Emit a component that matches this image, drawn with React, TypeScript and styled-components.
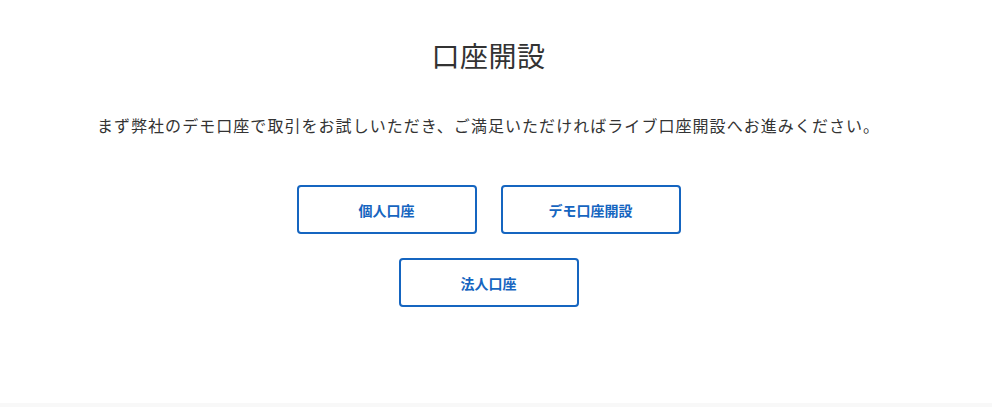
import React from "react";
import styled, { createGlobalStyle } from "styled-components";

const GlobalStyle = createGlobalStyle`
  body {
    margin: 0;
    background: #f8f8f8;
    font-family: "Noto Sans CJK JP", "Noto Sans", sans-serif;
  }
`;

const OpenAccount = () => {
  return (
    <>
      <GlobalStyle />
      <MainWrapper>
        <Inner>
          <Title>口座開設</Title>
          <Lead>
            まず弊社のデモ口座で取引をお試しいただき、ご満足いただければライブ口座開設へお進みください。
          </Lead>
          <ButtonGroup>
            <AccountButton>個人口座</AccountButton>
            <AccountButton>デモ口座開設</AccountButton>
            <AccountButton>法人口座</AccountButton>
          </ButtonGroup>
        </Inner>
      </MainWrapper>
      <Footer />
    </>
  );
};

export default OpenAccount;

const MainWrapper = styled.div`
  height: 403px;
  background: #ffffff;
  padding-right: 15px;
  box-sizing: border-box;
`;

const Inner = styled.div`
  display: flex;
  flex-direction: column;
  align-items: center;
  padding-top: 34px;
`;

const Title = styled.h1`
  margin: 0;
  font-size: 28px;
  font-weight: 400;
  line-height: 42px;
  letter-spacing: 0.5px;
  color: #333333;
`;

const Lead = styled.p`
  margin: 37px 0 0;
  font-size: 16px;
  line-height: 24px;
  letter-spacing: 1.05px;
  color: #333333;
`;

const ButtonGroup = styled.div`
  display: flex;
  flex-wrap: wrap;
  justify-content: center;
  gap: 24px;
  width: 390px;
  margin-top: 48px;
`;

const AccountButton = styled.button`
  display: flex;
  align-items: center;
  justify-content: center;
  width: 180px;
  height: 49px;
  box-sizing: border-box;
  border: 2px solid #1565c0;
  border-radius: 4px;
  background: #ffffff;
  color: #1565c0;
  font-family: inherit;
  font-size: 14px;
  font-weight: 700;
  padding: 0;
  :hover {
    cursor: pointer;
  }
`;

const Footer = styled.div`
  height: 4px;
  background: #f8f8f8;
`;
